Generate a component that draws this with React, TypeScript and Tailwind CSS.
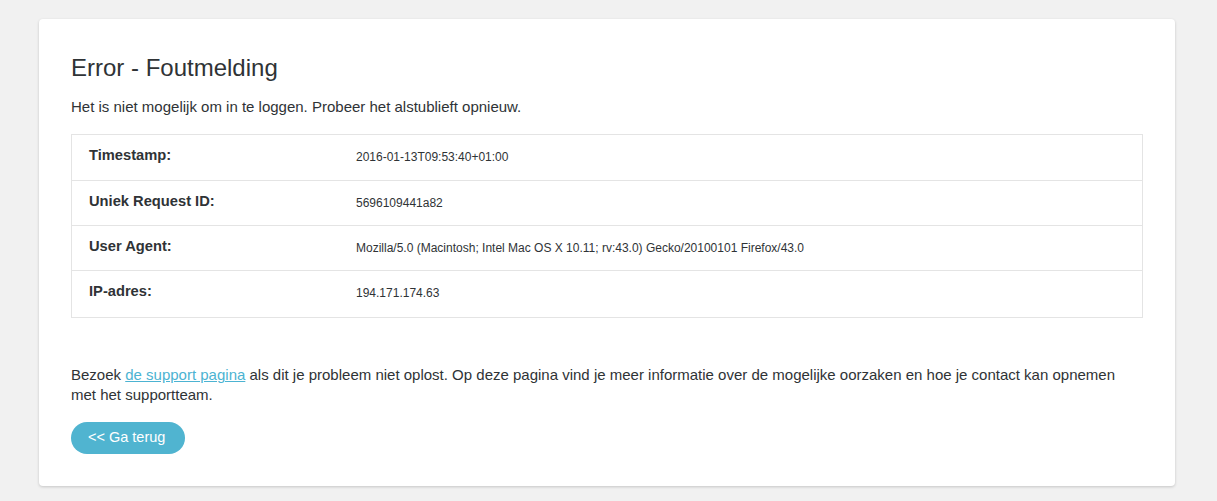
export default function App() {
  const rows: [string, string, string][] = [
    ["Timestamp:", "2016-01-13T09:53:40+01:00", "h-[46px]"],
    ["Uniek Request ID:", "5696109441a82", "h-[45px]"],
    ["User Agent:", "Mozilla/5.0 (Macintosh; Intel Mac OS X 10.11; rv:43.0) Gecko/20100101 Firefox/43.0", "h-[45px]"],
    ["IP-adres:", "194.171.174.63", "h-[46px]"],
  ];
  return (
    <div
      className="min-h-[501px] bg-[#f1f1f1] pt-[19px] pl-[39px] text-[#2f3336]"
      style={{ fontFamily: '"Liberation Sans", Arial, Helvetica, sans-serif' }}
    >
      <div className="w-[1136px] h-[467px] bg-white rounded-[4px] shadow-[0_1px_3px_rgba(0,0,0,0.18)] px-[32px] pt-[36px]">
        <h1 className="text-[24px] leading-[26px] font-normal">Error - Foutmelding</h1>
        <p className="mt-[16px] text-[15px] leading-[20px]">
          Het is niet mogelijk om in te loggen. Probeer het alstublieft opnieuw.
        </p>
        <div className="mt-[17px] border border-[#e4e4e4]">
          {rows.map(([label, value, h], i) => (
            <div
              key={label}
              className={`flex items-start ${h} ${i < rows.length - 1 ? "border-b border-[#e4e4e4]" : ""}`}
            >
              <div className="w-[284px] shrink-0 pl-[17px] pt-[10px] text-[14.7px] leading-[20px] font-bold">
                {label}
              </div>
              <div className="pt-[12px] text-[12px] leading-[20px]">{value}</div>
            </div>
          ))}
        </div>
        <p className="mt-[47px] text-[15px] leading-[20px]">
          Bezoek{" "}
          <a href="#" className="text-[#4cb3d2] underline">
            de support pagina
          </a>{" "}
          als dit je probleem niet oplost. Op deze pagina vind je meer informatie over de mogelijke oorzaken en hoe je contact kan opnemen
          <br />
          met het supportteam.
        </p>
        <button className="mt-[17px] h-[32px] w-[114px] rounded-full bg-[#50b4d0] text-white text-[14.5px] pl-[17px] text-left">
          &lt;&lt; Ga terug
        </button>
      </div>
    </div>
  );
}
